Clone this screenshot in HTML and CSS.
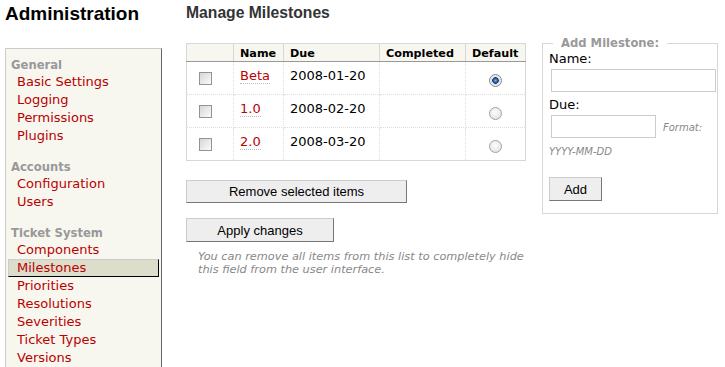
FILE: index.html
```html
<!DOCTYPE html>
<html lang="en">

<head>
    <title>Manage Milestones</title>
    <link rel="stylesheet" href="styles.css">
</head>

<body>
    <div class="page">
        <!--Admin navigation-->
        <div class="side">
            <h1>Administration</h1>
            <div class="tabs">
                <div class="group">
                    <h3>General</h3>
                    <a href="#">Basic Settings</a>
                    <a href="#">Logging</a>
                    <a href="#">Permissions</a>
                    <a href="#">Plugins</a>
                </div>
                <div class="group">
                    <h3>Accounts</h3>
                    <a href="#">Configuration</a>
                    <a href="#">Users</a>
                </div>
                <div class="group">
                    <h3>Ticket System</h3>
                    <a href="#">Components</a>
                    <a class="active" href="#">Milestones</a>
                    <a href="#">Priorities</a>
                    <a href="#">Resolutions</a>
                    <a href="#">Severities</a>
                    <a href="#">Ticket Types</a>
                    <a href="#">Versions</a>
                </div>
            </div>
        </div>

        <!--Milestone panel-->
        <div class="main">
            <h2>Manage Milestones</h2>
            <div class="content">
                <div class="list-block">
                    <table class="listing">
                        <colgroup>
                            <col class="c-sel">
                            <col class="c-name">
                            <col class="c-due">
                            <col class="c-done">
                            <col>
                        </colgroup>
                        <thead>
                            <tr>
                                <th></th>
                                <th>Name</th>
                                <th>Due</th>
                                <th>Completed</th>
                                <th>Default</th>
                            </tr>
                        </thead>
                        <tbody>
                            <tr>
                                <td class="sel"><input type="checkbox"></td>
                                <td><a href="#">Beta</a></td>
                                <td>2008-01-20</td>
                                <td></td>
                                <td class="default"><input type="radio" name="default" checked></td>
                            </tr>
                            <tr>
                                <td class="sel"><input type="checkbox"></td>
                                <td><a href="#">1.0</a></td>
                                <td>2008-02-20</td>
                                <td></td>
                                <td class="default"><input type="radio" name="default"></td>
                            </tr>
                            <tr>
                                <td class="sel"><input type="checkbox"></td>
                                <td><a href="#">2.0</a></td>
                                <td>2008-03-20</td>
                                <td></td>
                                <td class="default"><input type="radio" name="default"></td>
                            </tr>
                        </tbody>
                    </table>
                    <button class="btn remove">Remove selected items</button>
                    <button class="btn apply">Apply changes</button>
                    <p class="help">You can remove all items from this list to completely hide<br>this field from the user interface.</p>
                </div>

                <!--Add milestone form-->
                <fieldset class="add-form">
                    <legend>Add Milestone:</legend>
                    <label for="name">Name:</label>
                    <input type="text" id="name" class="name-input">
                    <label for="due" class="due-label">Due:</label>
                    <div class="due-row">
                        <input type="text" id="due" class="due-input">
                        <span class="hint">Format:</span>
                    </div>
                    <div class="hint date-hint">YYYY-MM-DD</div>
                    <button class="btn add">Add</button>
                </fieldset>
            </div>
        </div>
    </div>
</body>

</html>
```

FILE: styles.css
```css
/*global styling*/
* {
    box-sizing: border-box;
}

body {
    margin: 0;
    padding: 0;
    font-family: "DejaVu Sans", Verdana, sans-serif;
    font-size: 13px;
    color: #000;
    background: #fff;
}

/*page columns*/
.page {
    display: flex;
    height: 367px;
    overflow: hidden;
}

/*left side: title + tabs*/
.side {
    width: 162px;
    flex-shrink: 0;
    padding-left: 5px;
}

h1 {
    font: bold 19px/22px "Liberation Sans", Arial, sans-serif;
    margin: 3px 0 23px 0;
}

.tabs {
    border: 1px solid;
    border-color: #ccc #666 #666 #ccc;
    background: #f7f7f0;
    padding: 8px 0 14px;
}

.tabs h3 {
    margin: 0;
    padding-left: 5px;
    font-size: 11.6px;
    line-height: 16px;
    color: #999;
}

.group + .group {
    margin-top: 14px;
}

.tabs a {
    display: block;
    margin: 0 2px;
    padding-left: 8px;
    line-height: 16px;
    border: 1px solid transparent;
    color: #b00;
    text-decoration: none;
}

.tabs a.active {
    background: #ddc;
    border-color: #ccc #000 #000 #ccc;
}

/*main panel*/
.main {
    margin-left: 24px;
}

h2 {
    font: bold 15.7px/18px "Liberation Sans", Arial, sans-serif;
    color: #333;
    margin: 4px 0 21px;
}

.content {
    display: flex;
    align-items: flex-start;
    gap: 16px;
}

.list-block {
    width: 340px;
}

/*milestone table*/
.listing {
    width: 340px;
    table-layout: fixed;
    border-collapse: collapse;
    border: 1px solid #d7d7d7;
}

.c-sel {
    width: 47px;
}

.c-name {
    width: 50px;
}

.c-due {
    width: 96px;
}

.c-done {
    width: 86px;
}

.listing th {
    background: #f7f7f0;
    border: 1px solid #d7d7d7;
    border-bottom-color: #999;
    padding: 3px 6px 1px;
    font-size: 11.2px;
    line-height: 13px;
    text-align: left;
}

.listing tbody tr {
    height: 33px;
}

.listing td {
    border: 1px dotted #ddd;
    padding: 6px 6px 0;
    line-height: 16px;
    vertical-align: top;
}

.listing td a {
    color: #b00;
    text-decoration: none;
    border-bottom: 1px dotted #bbb;
}

.listing td.sel {
    padding-left: 12px;
}

.listing td.default {
    text-align: center;
}

.sel input {
    appearance: none;
    display: block;
    width: 13px;
    height: 13px;
    margin: 4px 0 0;
    border: 1px solid #939393;
    background: linear-gradient(135deg, #d6d6d6, #fbfbfb);
}

.default input {
    appearance: none;
    display: block;
    width: 13px;
    height: 13px;
    margin: 6px auto 0;
    border: 1px solid #a4a4a4;
    border-radius: 50%;
    background: radial-gradient(circle at 45% 40%, #fdfdfd, #dcdcdc);
}

.default input:checked {
    border-color: #8a8a8a;
    background: radial-gradient(circle, #7fb0ea 0, #2a5ca8 2px, #1b3e7a 3px, #dadada 3.6px, #f6f6f6 6px);
}

/*buttons*/
.btn {
    display: block;
    height: 23px;
    padding: 0;
    background: #eee;
    border: 1px solid;
    border-color: #ccc #777 #777 #ccc;
    font: 13px "Liberation Sans", Arial, sans-serif;
    color: #000;
}

.remove {
    width: 221px;
    margin-top: 19px;
}

.apply {
    width: 148px;
    height: 24px;
    margin-top: 15px;
}

.help {
    margin: 8px 0 0 12px;
    font-size: 11.3px;
    line-height: 13px;
    font-style: italic;
    color: #888;
}

/*add milestone fieldset*/
.add-form {
    width: 176px;
    min-width: 0;
    margin: -7px 0 0;
    padding: 1px 6px 12px;
    border: 1px solid #d7d7d7;
}

.add-form legend {
    margin-left: 4px;
    padding: 0 8px;
    font-weight: bold;
    font-size: 11.6px;
    line-height: 14px;
    color: #999;
}

.add-form label {
    display: block;
    line-height: 16px;
}

.add-form input {
    height: 23px;
    margin: 2px 0 0 2px;
    border: 1px solid #ccc;
    background: #fff;
}

.name-input {
    display: block;
    width: 165px;
}

.due-label {
    margin-top: 5px;
}

.due-row {
    display: flex;
    align-items: flex-end;
}

.due-input {
    width: 105px;
}

.hint {
    font-size: 10px;
    line-height: 12px;
    font-style: italic;
    color: #888;
}

.due-row .hint {
    margin: 0 0 4px 7px;
}

.date-hint {
    margin-top: 8px;
}

.add {
    width: 53px;
    height: 24px;
    margin-top: 19px;
}
```
